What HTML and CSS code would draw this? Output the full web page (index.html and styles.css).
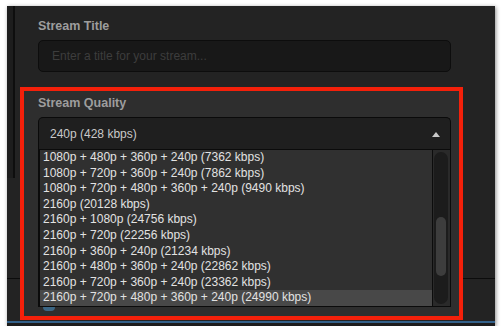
FILE: index.html
```html
<!DOCTYPE html>
<html>
<head>
<meta charset="utf-8">
<link rel="stylesheet" href="styles.css">
</head>
<body>
<div class="frame">
  <div class="title-group">
    <div class="label">Stream Title</div>
    <div class="input">Enter a title for your stream...</div>
  </div>
  <div class="quality">
    <div class="label">Stream Quality</div>
    <div class="select">
      <span>240p (428 kbps)</span>
      <svg class="caret" width="8" height="5" viewBox="0 0 8 5"><polygon points="0,5 8,5 4,0" fill="#c9c9c9"/></svg>
    </div>
    <div class="list">
      <div class="items">
        <div class="item">1080p + 480p + 360p + 240p (7362 kbps)</div>
        <div class="item">1080p + 720p + 360p + 240p (7862 kbps)</div>
        <div class="item">1080p + 720p + 480p + 360p + 240p (9490 kbps)</div>
        <div class="item">2160p (20128 kbps)</div>
        <div class="item">2160p + 1080p (24756 kbps)</div>
        <div class="item">2160p + 720p (22256 kbps)</div>
        <div class="item">2160p + 360p + 240p (21234 kbps)</div>
        <div class="item">2160p + 480p + 360p + 240p (22862 kbps)</div>
        <div class="item">2160p + 720p + 360p + 240p (23362 kbps)</div>
        <div class="item active">2160p + 720p + 480p + 360p + 240p (24990 kbps)</div>
      </div>
      <div class="scroll">
        <div class="groove"><div class="thumb"></div></div>
      </div>
    </div>
    <div class="peek"></div>
  </div>
  <div class="footer"></div>
</div>
</body>
</html>
```
FILE: styles.css
```css
html, body {
  margin: 0;
  padding: 0;
  background: #ffffff;
}
body {
  font-family: "Liberation Sans", Arial, sans-serif;
}
.frame {
  position: relative;
  margin: 6px 0 0 7px;
  width: 488px;
  height: 320px;
  background: #232323;
  box-shadow: 1px 1px 4px rgba(0, 0, 0, 0.45);
  overflow: hidden;
  box-sizing: border-box;
}
.frame::before {
  content: "";
  position: absolute;
  left: 0;
  top: 0;
  width: 6px;
  height: 172px;
  background: #1d1d1d;
  border-right: 2px solid #0e0e0e;
}
.frame::after {
  content: "";
  position: absolute;
  left: 0;
  right: 0;
  top: 272px;
  height: 1px;
  background: #0c0c0c;
}
.title-group {
  position: relative;
  z-index: 1;
  padding: 13px 0 0 31px;
  width: 413px;
}
.label {
  font-size: 12.5px;
  line-height: 14px;
  font-weight: bold;
  color: #9d9d9d;
  margin-bottom: 7px;
}
.input {
  height: 32px;
  box-sizing: border-box;
  border: 1px solid #0d0d0d;
  border-radius: 5px;
  background: #181818;
  color: #3d3d3d;
  font-size: 12px;
  line-height: 30px;
  padding-left: 13px;
}
.quality {
  position: relative;
  z-index: 1;
  margin: 15px 0 0 13px;
  width: 443px;
  box-sizing: border-box;
  border: 4px solid #f4200a;
  background: #2e2e2e;
  padding: 5px 8px 0 14px;
}
.select {
  height: 32px;
  box-sizing: border-box;
  border: 1px solid #0a0a0a;
  border-bottom: none;
  border-radius: 5px 5px 0 0;
  background: #1f1f1f;
  color: #c9c9c9;
  font-size: 12px;
  display: flex;
  align-items: center;
  justify-content: space-between;
  padding: 1px 10px 0 11px;
}
.caret {
  display: block;
}
.list {
  height: 158px;
  box-sizing: border-box;
  border: 1px solid #0b0b0b;
  border-left-width: 2px;
  background: #303030;
  display: grid;
  grid-template-columns: 1fr 18px;
}
.items {
  display: flex;
  flex-direction: column;
}
.item {
  height: 15.6px;
  line-height: 15.6px;
  font-size: 12px;
  color: #e2e2e2;
  padding-left: 3px;
  white-space: nowrap;
}
.item.active {
  background: #484848;
}
.scroll {
  border-left: 1px solid #0c0c0c;
  background: #2a2a2a;
  padding: 2px 2px 2px 1px;
  display: flex;
}
.groove {
  flex: 1;
  background: #1c1c1c;
  border-radius: 7px;
  padding: 65px 2px 0 2px;
}
.thumb {
  height: 59px;
  border-radius: 5px;
  background: #3d3d3d;
}
.peek {
  width: 12px;
  height: 4px;
  margin: 0 0 5px 5px;
  border-radius: 0 0 6px 6px;
  background: #3b6685;
}
.footer {
  margin-top: 1px;
  border-top: 2px solid #33618a;
  height: 3px;
  background: #1c1c1c;
}
```
